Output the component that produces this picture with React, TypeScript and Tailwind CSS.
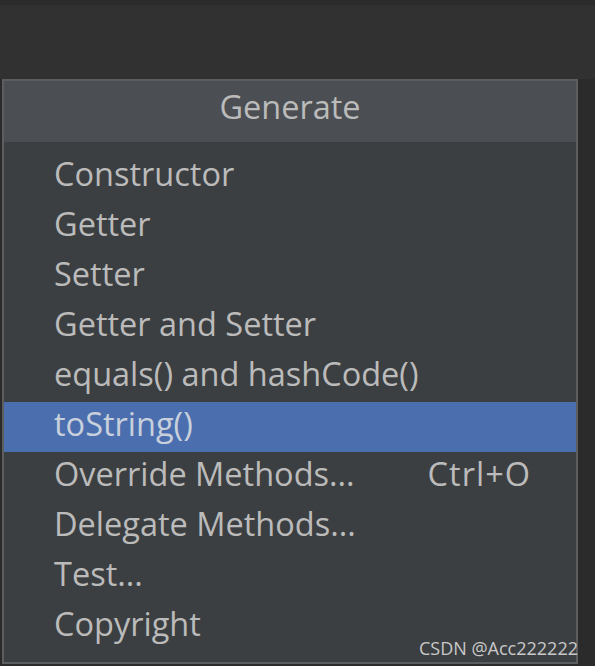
import React from "react";

const items: { label: string; shortcut?: string; selected?: boolean }[] = [
  { label: "Constructor" },
  { label: "Getter" },
  { label: "Setter" },
  { label: "Getter and Setter" },
  { label: "equals() and hashCode()" },
  { label: "toString()", selected: true },
  { label: "Override Methods...", shortcut: "Ctrl+O" },
  { label: "Delegate Methods..." },
  { label: "Test..." },
  { label: "Copyright" },
];

export default function App() {
  return (
    <div
      className="relative w-[595px] h-[666px] overflow-hidden bg-[#2b2b2b] flex flex-col"
      style={{ fontFamily: '"Open Sans", "Noto Sans", sans-serif' }}
    >
      <div className="h-[5px] bg-[#2b2b2b]" />
      <div className="h-[74px] bg-[#313131]" />
      <div className="flex">
        <div className="w-[2px]" />
        <div className="w-[576px] border-2 border-[#5b5d5f] bg-[#3c3f41] flex flex-col">
          <div className="h-[61px] bg-[#4b4e52] flex items-center justify-center pb-[8px] text-[32.5px] leading-none text-[#bbbbbb]">
            Generate
          </div>
          <div className="flex flex-col py-[10px]">
            {items.map((it) => (
              <div
                key={it.label}
                className={`h-[50px] flex items-center justify-between pl-[50px] pr-[45px] pb-[5px] text-[32.5px] leading-none ${
                  it.selected ? "bg-[#4b6eaf] text-[#c8d0dc]" : "text-[#bbbbbb]"
                }`}
              >
                <span>{it.label}</span>
                {it.shortcut && <span className="tracking-[1px]">{it.shortcut}</span>}
              </div>
            ))}
          </div>
        </div>
      </div>
      <div className="absolute right-[17px] bottom-[9px] text-[18px] leading-none text-[#c9c9c9]">
        CSDN @Acc222222
      </div>
    </div>
  );
}
